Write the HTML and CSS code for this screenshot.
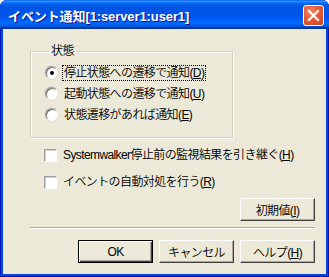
FILE: index.html
```html
<!DOCTYPE html>
<html>
<head>
  <meta charset="UTF-8">
  <title>イベント通知</title>
  <link rel="stylesheet" href="styles.css">
</head>
<body>
  <div class="window">
    <div class="titlebar">
      <span class="title">イベント通知[1:server1:user1]</span>
      <button class="close" aria-label="閉じる">
        <svg width="13" height="13" viewBox="0 0 13 13">
          <path d="M2 2 L11 11 M11 2 L2 11" stroke="#fff" stroke-width="2.2" stroke-linecap="square"/>
        </svg>
      </button>
    </div>

    <div class="client">
      <fieldset class="group">
        <legend>状態</legend>
        <label class="row">
          <span class="radio checked"></span>
          <span class="text focus">停止状態への遷移で通知(<u>D</u>)</span>
        </label>
        <label class="row">
          <span class="radio"></span>
          <span class="text">起動状態への遷移で通知(<u>U</u>)</span>
        </label>
        <label class="row">
          <span class="radio"></span>
          <span class="text">状態遷移があれば通知(<u>E</u>)</span>
        </label>
      </fieldset>

      <label class="row check-row">
        <span class="check"></span>
        <span class="text">Systemwalker停止前の監視結果を引き継ぐ(<u>H</u>)</span>
      </label>
      <label class="row check-row second">
        <span class="check"></span>
        <span class="text">イベントの自動対処を行う(<u>R</u>)</span>
      </label>

      <div class="reset-line">
        <button class="btn">初期値(<u>I</u>)</button>
      </div>

      <div class="separator"></div>

      <div class="actions">
        <button class="btn default">OK</button>
        <button class="btn">キャンセル</button>
        <button class="btn">ヘルプ(<u>H</u>)</button>
      </div>
    </div>
  </div>
</body>
</html>
```

FILE: styles.css
```css
body {
  margin: 0;
  background: #fff;
  font-family: "Liberation Sans", "Noto Sans CJK JP", sans-serif;
  font-size: 12px;
  font-weight: 350;
  letter-spacing: -0.6px;
  color: #000;
}
.window {
  width: 329px;
  height: 277px;
  display: flex;
  flex-direction: column;
  border-radius: 7px 7px 0 0;
  background: #0842dc;
  box-shadow: inset 1px 0 0 #0019b8, inset -1px 0 0 #001aa0, inset 0 -1px 0 #001aa0;
  overflow: hidden;
}
.titlebar {
  height: 29px;
  flex: none;
  display: flex;
  align-items: center;
  justify-content: space-between;
  padding: 0 5px 0 8px;
  box-sizing: border-box;
  background: linear-gradient(to bottom, #0058ee 0%, #3593ff 4%, #288eff 6%, #127dff 8%, #036ffc 10%, #0262ee 14%, #0057e5 20%, #0054e3 24%, #0055eb 56%, #005bf5 66%, #026afe 76%, #0062ef 86%, #0052d6 92%, #0040ab 94%, #003092 100%);
}
.title {
  color: #fff;
  font-weight: bold;
  font-size: 13px;
  letter-spacing: -0.1px;
  text-shadow: 1px 1px 0 #0f1089;
  padding-top: 1px;
}
.close {
  width: 21px;
  height: 21px;
  padding: 0;
  border: 1px solid #fff;
  border-radius: 3px;
  background: radial-gradient(circle at 35% 30%, #f0856a 0%, #e45c38 45%, #cc4118 100%);
  display: flex;
  align-items: center;
  justify-content: center;
  margin-top: 1px;
}
.client {
  flex: 1;
  margin: 0 3px 3px 3px;
  background: #ece9d8;
  padding: 15px 11px 0 27px;
  display: flex;
  flex-direction: column;
}
.group {
  width: 187px;
  margin: 0;
  padding: 4px 0 12px 14px;
  border: 1px solid #d0d0bf;
  box-shadow: 1px 1px 0 #fff, inset 1px 1px 0 #fff;
}
.group legend {
  padding: 0 2px;
  margin-left: 4px;
  line-height: 14px;
}
.row {
  display: flex;
  align-items: center;
  height: 21px;
  gap: 4px;
  line-height: 14px;
}
.text {
  padding: 0 1px;
  border: 1px dotted transparent;
  white-space: nowrap;
}
.text.focus {
  border-color: #000;
}
.radio {
  width: 11px;
  height: 11px;
  flex: none;
  border-radius: 50%;
  background: #fff;
  border: 1px solid;
  border-color: #a0a0a0 #fff #fff #a0a0a0;
  box-shadow: inset 1px 1px 0 #6c6c6c, 0 0 0 0.5px #d4d0c8;
  display: flex;
  align-items: center;
  justify-content: center;
}
.radio.checked::after {
  content: "";
  width: 4px;
  height: 4px;
  border-radius: 50%;
  background: #000;
}
.check-row {
  margin-top: 8px;
  padding-left: 14px;
  height: 18px;
}
.check-row.second {
  margin-top: 9px;
}
.check {
  width: 11px;
  height: 11px;
  flex: none;
  background: #fff;
  border: 1px solid;
  border-color: #a0a0a0 #fff #fff #a0a0a0;
  box-shadow: inset 1px 1px 0 #d4d0c8;
}
.reset-line {
  display: flex;
  justify-content: flex-end;
  margin-top: 7px;
}
.separator {
  margin-top: 6px;
  height: 0;
  border-top: 1px solid #aca899;
  border-bottom: 1px solid #fff;
}
.actions {
  display: flex;
  justify-content: flex-end;
  gap: 6px;
  margin-top: 11px;
}
.btn {
  width: 75px;
  height: 23px;
  padding: 0;
  box-sizing: border-box;
  background: #ece9d8;
  font-family: inherit;
  font-size: 12px;
  font-weight: 350;
  letter-spacing: -0.6px;
  color: #000;
  border: 1px solid;
  border-color: #fff #404040 #404040 #fff;
  box-shadow: inset -1px -1px 0 #aca899;
}
.btn.default {
  border: 1px solid #000;
  box-shadow: inset 1px 1px 0 #fff, inset -1px -1px 0 #404040, inset -2px -2px 0 #aca899;
}
```
